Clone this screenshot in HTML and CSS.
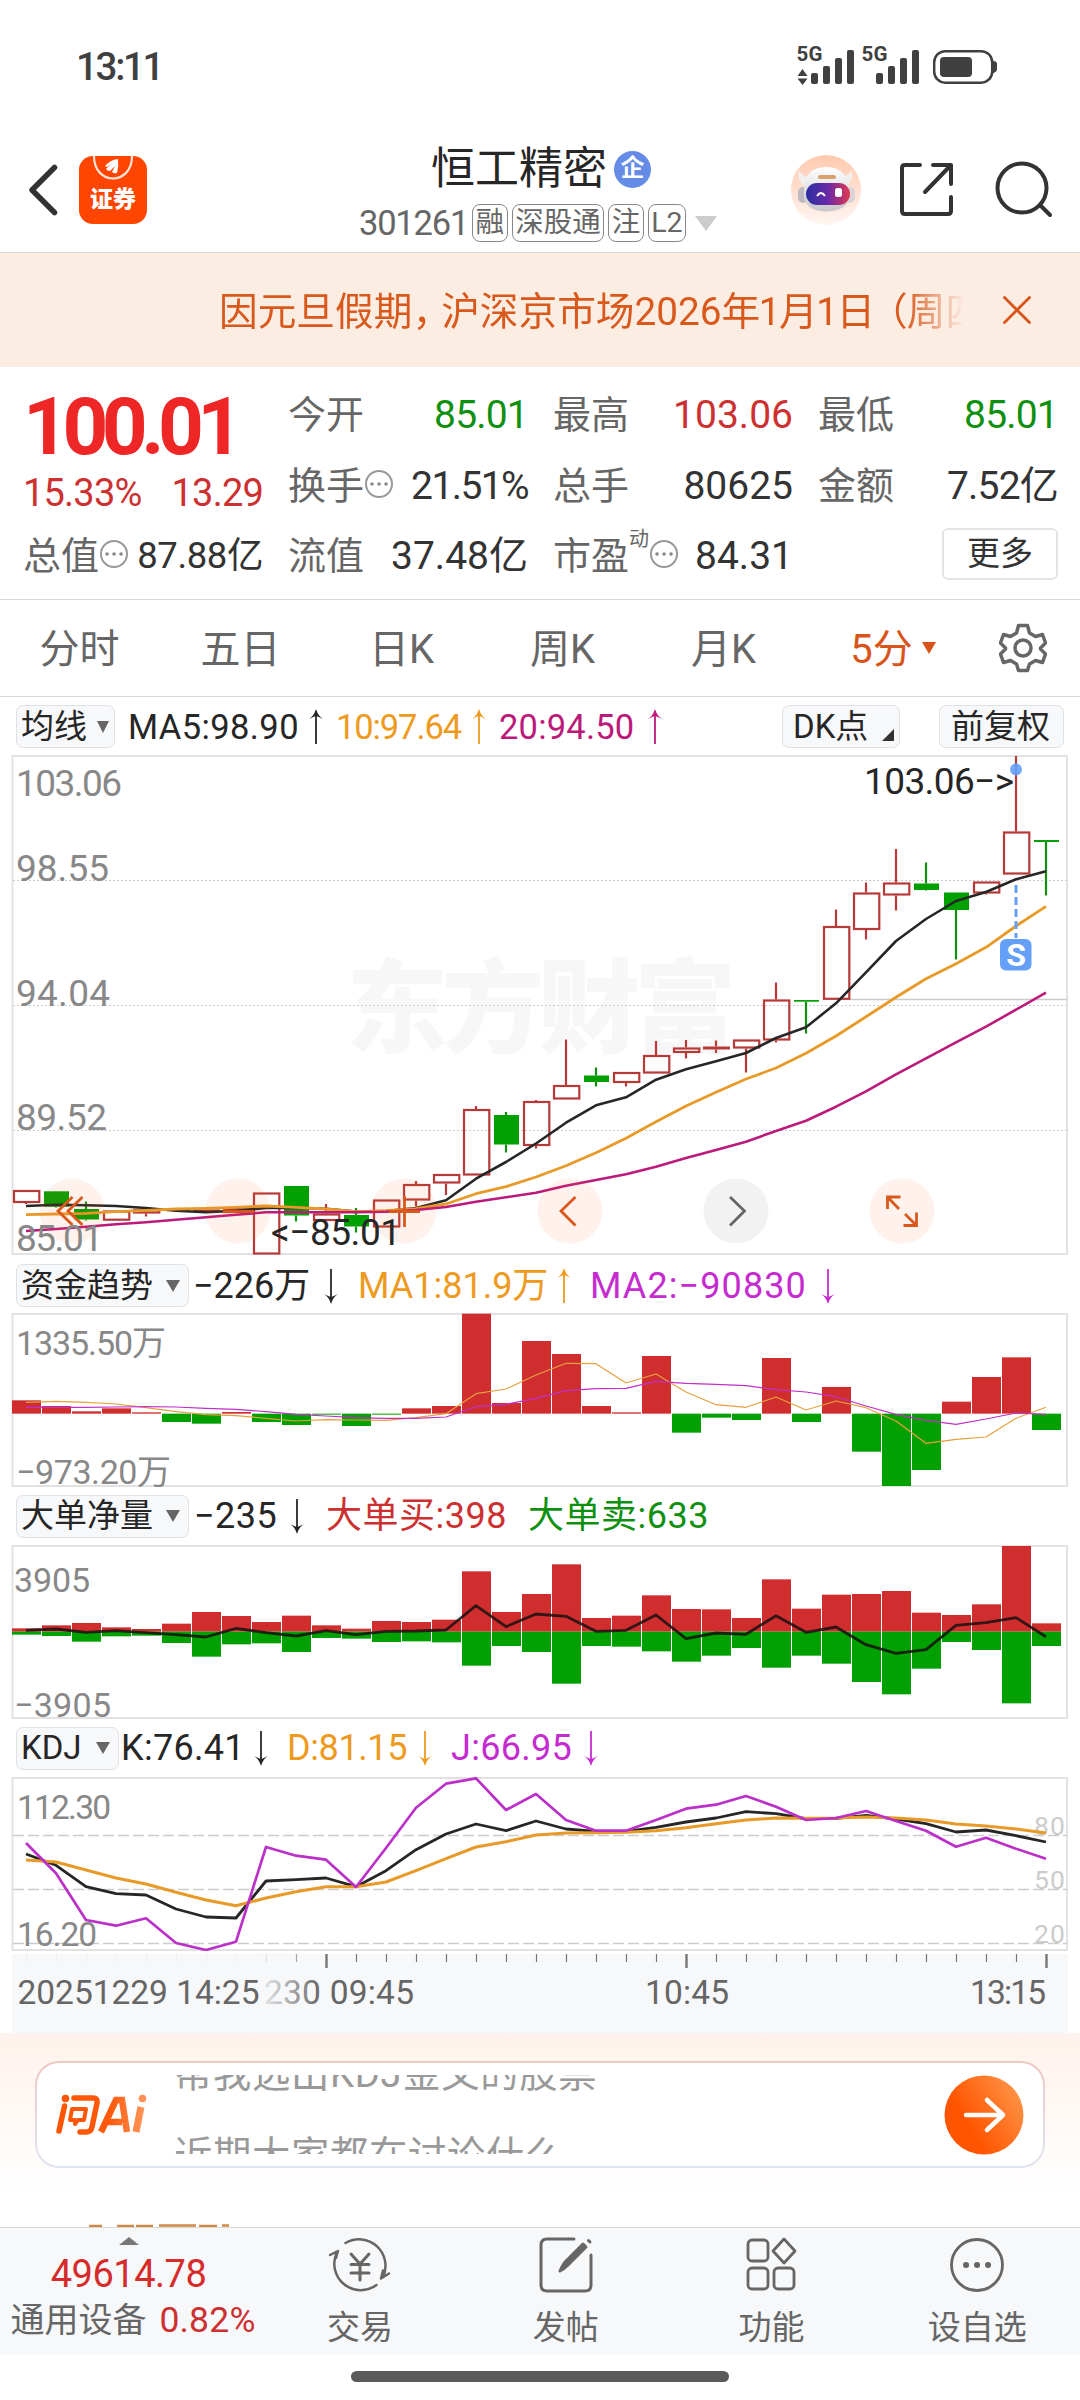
FILE: index.html
```html
<!DOCTYPE html>
<html lang="zh-CN">
<head>
<meta charset="utf-8">
<title>恒工精密 301261</title>
<link rel="stylesheet" href="styles.css">
</head>
<body>
<div class="status">
  <span class="clock">13:11</span>
  <svg class="signals" width="202" height="42" viewBox="796 42 202 42">
    <g fill="#404040">
      <text x="796.500" y="59" font-size="20.500" font-weight="700" textLength="26">5G</text>
      <text x="861.500" y="59" font-size="20.500" font-weight="700" textLength="26">5G</text>
      <path d="M802.500 67l5 7h-10zM802.500 83l5-6.500h-10z"/>
      <rect x="811" y="71" width="7" height="11" rx="2"/><rect x="823" y="64" width="7" height="18" rx="2"/><rect x="835" y="56" width="7" height="26" rx="2"/><rect x="847" y="48" width="7" height="34" rx="2"/>
      <rect x="876" y="71" width="7" height="11" rx="2"/><rect x="888" y="64" width="7" height="18" rx="2"/><rect x="900" y="56" width="7" height="26" rx="2"/><rect x="912" y="48" width="7" height="34" rx="2"/>
      <rect x="940" y="55" width="32" height="20" rx="4"/><path d="M993 59q4 0 4 3v5q0 3-4 4z"/>
    </g>
    <rect x="934.200" y="49.200" width="58" height="31.500" rx="11" fill="none" stroke="#404040" stroke-width="2.500"/>
  </svg>
</div>

<header class="header">
  <div class="left">
    <svg width="32" height="54" viewBox="0 0 32 54" fill="none" stroke="#333" stroke-width="5.500" stroke-linecap="round" stroke-linejoin="round"><path d="M28.500 4.500L6 27l22.500 22.500"/></svg>
    <div class="app">
      <svg width="68" height="26" viewBox="0 0 68 26" fill="none"><path d="M15 0c0 30 38 30 38 0" stroke="#ffe3d6" stroke-width="2.200"/><path d="M26 10q5-6 13-7q1 7-1 14-3 1-5-1l3-6-5 5q-3 0-4-2l5-5-4 3z" fill="#fff"/></svg>
      <span>证券</span>
    </div>
  </div>
  <div class="title">
    <div class="name">恒工精密<i class="corp">企</i></div>
    <div class="sub"><span class="code">301261</span><b>融</b><b>深股通</b><b>注</b><b>L2</b><svg width="22" height="15" viewBox="0 0 22 15"><path d="M0 0h22L11 15z" fill="#ccc"/></svg></div>
  </div>
  <div class="right">
    <svg width="70" height="70" viewBox="0 0 70 70">
      <defs>
        <linearGradient id="halo" x2="0" y2="1"><stop stop-color="#ffc9ae"/><stop offset="1" stop-color="#fff6f2"/></linearGradient>
        <linearGradient id="visor"><stop stop-color="#2b2fa0"/><stop offset=".5" stop-color="#6a2aa8"/><stop offset="1" stop-color="#e23a50"/></linearGradient>
        <linearGradient id="shell" x2="0" y2="1"><stop stop-color="#fff"/><stop offset="1" stop-color="#c9c6cc"/></linearGradient>
      </defs>
      <circle cx="35" cy="35" r="35" fill="url(#halo)"/>
      <path d="M8 15q-2 12 6 16l8-8q-10 0-14-8zM61 15q2 10-5 15l-8-8q9 0 13-7z" fill="#f3efef"/>
      <rect x="7" y="32" width="10" height="16" rx="5" fill="#bdb9bf"/><rect x="54" y="32" width="10" height="16" rx="5" fill="#d8d4d8"/>
      <path d="M13 36q0-24 22-24t23 24q3 20-23 20.500Q11 56 13 36z" fill="url(#shell)"/>
      <rect x="27" y="20" width="18" height="4" rx="2" fill="#dba06c"/>
      <rect x="15" y="28" width="44" height="22" rx="11" fill="url(#visor)"/>
      <path d="M26 41q4-6 8 0" stroke="#fff" stroke-width="2" fill="none"/><rect x="44" y="33" width="7" height="9" rx="2.500" fill="#fff"/>
    </svg>
    <svg width="56" height="56" viewBox="0 0 56 56" fill="none" stroke="#333" stroke-width="4" stroke-linecap="round" stroke-linejoin="round"><path d="M21 3H6q-3 0-3 3v43q0 3 3 3h43q3 0 3-3V35M34 3h18v19M52 3L26 30"/></svg>
    <svg width="58" height="58" viewBox="0 0 58 58" fill="none" stroke="#333" stroke-width="4" stroke-linecap="round"><circle cx="27" cy="27" r="24.500"/><path d="M45 44l10 10"/></svg>
  </div>
</header>

<div class="banner">
  <div class="notice">因元旦假期<span class="comma">，</span>沪深京市场2026年<span class="one">1</span>月<span class="one">1</span>日<span class="paren">（</span>周四）</div>
  <svg width="30" height="30" viewBox="0 0 30 30" stroke="#d9541a" stroke-width="2.800" stroke-linecap="round"><path d="M2.500 2.500l25 25M27.500 2.500l-25 25"/></svg>
</div>

<section class="quote">
  <div class="price">100.01</div>
  <div class="q"><label>今开</label><span class="g">85.01</span></div>
  <div class="q"><label>最高</label><span class="r">103.06</span></div>
  <div class="q"><label>最低</label><span class="g">85.01</span></div>
  <div class="q pct"><span class="r">15.33%</span><span class="r">13.29</span></div>
  <div class="q"><label>换手<svg class="dots" viewBox="0 0 30 30"><circle cx="15" cy="15" r="13" fill="none" stroke="#999" stroke-width="2"/><path d="M8 15h.1M15 15h.1M22 15h.1" stroke="#888" stroke-width="3.500" stroke-linecap="round"/></svg></label><span class="n2">21.51%</span></div>
  <div class="q"><label>总手</label><span>80625</span></div>
  <div class="q"><label>金额</label><span class="n3">7.52亿</span></div>
  <div class="q"><label>总值<svg class="dots" viewBox="0 0 30 30"><circle cx="15" cy="15" r="13" fill="none" stroke="#999" stroke-width="2"/><path d="M8 15h.1M15 15h.1M22 15h.1" stroke="#888" stroke-width="3.500" stroke-linecap="round"/></svg></label><span class="small">87.88亿</span></div>
  <div class="q"><label>流值</label><span>37.48亿</span></div>
  <div class="q"><label>市盈<sup>动</sup><svg class="dots" viewBox="0 0 30 30"><circle cx="15" cy="15" r="13" fill="none" stroke="#999" stroke-width="2"/><path d="M8 15h.1M15 15h.1M22 15h.1" stroke="#888" stroke-width="3.500" stroke-linecap="round"/></svg></label><span>84.31</span></div>
  <div class="q end"><button class="more">更多</button></div>
</section>

<nav class="tabs">
  <a>分时</a><a>五日</a><a>日K</a><a>周K</a><a>月K</a>
  <a class="on">5分<svg width="14" height="12" viewBox="0 0 14 12"><path d="M0 0h14L7 12z" fill="#d9541a"/></svg></a>
  <svg class="gear" width="48" height="50" viewBox="0 0 48 50" fill="none" stroke="#666" stroke-width="3.500" stroke-linejoin="round"><path d="M19.500 2.500h9l2 7.500 6 3.500 7-2 3 8.500-5 5v1l5 5-3 8.500-7-2-6 3.500-2 6.500h-9l-2-6.500-6-3.500-7 2-3-8.500 5-5v-1l-5-5 3-8.500 7 2 6-3.500z"/><circle cx="24" cy="25" r="8"/></svg>
</nav>

<div class="legend lg1">
  <button>均线<i class="tri"></i></button>
  <span class="k">MA5:98.90</span><svg class="up k"><use href="#arrow"/></svg>
  <span class="o">10:97.64</span><svg class="up o"><use href="#arrow"/></svg>
  <span class="m">20:94.50</span><svg class="up m"><use href="#arrow"/></svg>
  <button class="dk">DK点<i class="corner"></i></button>
  <button class="fq">前复权</button>
</div>
<svg class="hidden" width="0" height="0"><defs><symbol id="arrow" viewBox="0 0 16 36"><path d="M8 35V2" stroke="currentColor" stroke-width="1.800" fill="none"/><path d="M1 10Q6 7 8 0q2 7 7 10Q9 7 8 7T1 10z" fill="currentColor"/></symbol></defs></svg>

<svg class="chart" id="candles" width="1080" height="502" viewBox="0 754 1080 502">
  <g fill="#f7f7f7"><text x="346" y="1045" font-size="102" font-weight="900" textLength="390">东方财富</text></g>
  <rect x="12.500" y="756" width="1054.500" height="498" class="frame"/>
  <path d="M13 880.500H1067M13 1005.500H1067M13 1130.500H1067" stroke="#ccc" stroke-dasharray="2 2"/>
  <path d="M850 999.500H1067" stroke="#ccc" stroke-width="1.500"/>
</svg>

<div class="legend lg2">
  <button>资金趋势<i class="tri"></i></button>
  <span class="k">−226万</span><svg class="down k"><use href="#arrow"/></svg>
  <span class="o">MA1:81.9万</span><svg class="up o"><use href="#arrow"/></svg>
  <span class="p">MA2:−90830</span><svg class="down p"><use href="#arrow"/></svg>
</div>
<svg class="chart" id="flow" width="1080" height="174" viewBox="0 1313 1080 174">
  <rect x="12.500" y="1314" width="1054.500" height="172" class="frame"/>
</svg>

<div class="legend lg3">
  <button>大单净量<i class="tri"></i></button>
  <span class="k">−235</span><svg class="down k"><use href="#arrow"/></svg>
  <span class="r">大单买:398</span>
  <span class="g">大单卖:633</span>
</div>
<svg class="chart" id="orders" width="1080" height="174" viewBox="0 1545 1080 174">
  <rect x="12.500" y="1546" width="1054.500" height="172" class="frame"/>
</svg>

<div class="legend lg4">
  <button>KDJ<i class="tri"></i></button>
  <span class="k">K:76.41</span><svg class="down k"><use href="#arrow"/></svg>
  <span class="o">D:81.15</span><svg class="down o"><use href="#arrow"/></svg>
  <span class="p">J:66.95</span><svg class="down p"><use href="#arrow"/></svg>
</div>
<svg class="chart" id="kdj" width="1080" height="174" viewBox="0 1777 1080 174">
  <rect x="12.500" y="1778" width="1054.500" height="172" class="frame"/>
  <path d="M13 1835.500H1067M13 1889.500H1067M13 1943.500H1067" stroke="#ccc" stroke-width="1.500" stroke-dasharray="11 4"/>
</svg>
<svg class="chart" id="axis" width="1080" height="82" viewBox="0 1951 1080 82">
  <defs><linearGradient id="fade"><stop stop-color="#f7f8fa"/><stop offset=".15" stop-color="#f7f8fa" stop-opacity=".85"/><stop offset="1" stop-color="#f7f8fa" stop-opacity="0"/></linearGradient></defs>
  <rect x="12" y="1954" width="1056" height="79" fill="#f7f8fa"/>
</svg>

<section class="ask">
  <div class="card">
    <svg class="logo" width="94" height="44" viewBox="54 2093 94 44">
      <defs><linearGradient id="ai" gradientUnits="userSpaceOnUse" x1="56" y1="0" x2="147" y2="0"><stop stop-color="#ff5500"/><stop offset=".6" stop-color="#ff5a0c"/><stop offset="1" stop-color="#ff9a60"/></linearGradient></defs>
      <g fill="none" stroke="url(#ai)">
        <path d="M64.500 2106l-5.500 25M74 2098h19q5 0 4 5l-5 24q-1 5-6 5h-6" stroke-width="5.500" stroke-linecap="round"/>
        <path d="M72 2109h14l-2 11h-6l-3 4v-4h-5z" stroke-width="4" stroke-linejoin="round"/>
        <path d="M101 2132l15-32h6l5 32M108 2122h14" stroke-width="6.500"/>
        <path d="M141 2107l-5 25" stroke-width="7"/>
      </g>
      <circle cx="65.500" cy="2098.500" r="3.800" fill="#ff5500"/><circle cx="142.500" cy="2098.500" r="3.800" fill="#ff9058"/>
    </svg>
    <div class="ticker"><p>帮我选出KDJ金叉的股票</p><p>近期大家都在讨论什么</p></div>
    <svg width="80" height="80" viewBox="0 0 80 80"><defs><linearGradient id="go" x1="0" y1=".7" x2="1" y2=".1"><stop offset=".25" stop-color="#ff5500"/><stop offset="1" stop-color="#ff9a4e"/></linearGradient></defs><circle cx="40" cy="40" r="39.500" fill="url(#go)"/><path d="M22 40h36M43 25l16 15-16 15" fill="none" stroke="#fff" stroke-width="4.500" stroke-linecap="round" stroke-linejoin="round"/></svg>
  </div>
  <svg class="peek" width="150" height="3" viewBox="0 0 150 3"><path d="M1 2h13M29 2h17M48 2h17M71 1.500h37M111 2h18M134 1.500h7" stroke="#cf8a45" stroke-width="2.500"/></svg>
</section>

<nav class="bottom">
  <div class="index">
    <svg width="20" height="8" viewBox="0 0 20 8"><path d="M0 8L10 0l10 8z" fill="#777"/></svg>
    <strong>49614.78</strong>
    <div>通用设备<em>0.82%</em></div>
  </div>
  <a><svg viewBox="0 0 64 60" fill="none" stroke="#666" stroke-width="2.500" stroke-linecap="round" stroke-linejoin="round"><path d="M17.500 8A26.500 26.500 0 0 1 55 42M48.500 50A26.500 26.500 0 0 1 9 17M2 20l8-4-2 7M61 38.500l-8 5 2-8"/><path d="M23 19l9 10 9-10M32 29v16M23 29.500h18M23 38h18" stroke-width="3"/></svg>交易</a>
  <a><svg viewBox="0 0 64 60" fill="none" stroke="#666" stroke-width="3" stroke-linecap="round" stroke-linejoin="round"><path d="M40 4H13q-6 0-6 6v40q0 6 6 6h38q6 0 6-6V20"/><path d="M26 36q3-7 6-10l17-17 3 3-18 18q-4 4-8 6zM54.500 5.500l1.500 1.500" fill="#666"/></svg>发帖</a>
  <a><svg viewBox="0 0 64 60" fill="none" stroke="#666" stroke-width="2.800" stroke-linejoin="round"><rect x="9" y="5" width="20" height="21" rx="4"/><rect x="9" y="33" width="20" height="21" rx="4"/><rect x="35" y="33" width="20" height="21" rx="4"/><path d="M45 4L56 16 45 28 34 16z"/></svg>功能</a>
  <a><svg viewBox="0 0 64 60" fill="none" stroke="#666" stroke-width="2.800"><circle cx="32" cy="30" r="25.500"/><path d="M21 30h.1M32 30h.1M43 30h.1" stroke-width="6" stroke-linecap="round"/></svg>设自选</a>
</nav>
<div class="home"></div>
<script src="chart.js"></script>
</body>
</html>
```
FILE: styles.css
```css
* { box-sizing: border-box; }
body {
  margin: 0; width: 1080px; height: 2400px; overflow: hidden; background: #fff; color: #333;
  font-family: Roboto, "Noto Sans CJK SC", sans-serif;
}
button { font: inherit; color: inherit; padding: 0; margin: 0; }
svg { display: block; flex: none; }
i, em { font-style: normal; }
.hidden { height: 0; }

.status { height: 130px; display: flex; justify-content: space-between; align-items: center; padding: 0 82px 0 76px; }
.clock { font-size: 38.5px; font-weight: 500; color: #404040; letter-spacing: -2.3px; line-height: 40px; margin-top: 3px; }
.signals { overflow: visible; }

.header { height: 123px; border-bottom: 1px solid #d8d8d8; display: grid; grid-template-columns: 300px 1fr 300px; }
.left { display: flex; align-items: center; padding: 0 0 2px 26px; gap: 21px; }
.app { width: 68px; height: 68px; border-radius: 14px; background: #ff4500; color: #fff; overflow: hidden; text-align: center; }
.app span { display: block; font-size: 23px; font-weight: 900; line-height: 26px; margin-top: 5px; }
.title { display: flex; flex-direction: column; align-items: center; padding-top: 13px; }
.name { display: flex; align-items: center; font-size: 44px; line-height: 50px; color: #262626; height: 52px; margin-left: 2px; }
.corp { width: 37px; height: 37px; border-radius: 50%; background: #648ce6; color: #fff; font-size: 24px; font-weight: 700; line-height: 35px; text-align: center; margin-left: 7px; }
.sub { display: flex; align-items: center; color: #666; margin: 8px 0 0 -4px; height: 40px; }
.code { font-size: 34.5px; letter-spacing: -1.2px; margin-right: 4px; }
.sub b { height: 38px; border: 1.5px solid #888; border-radius: 8px; font-weight: 400; font-size: 28.5px; line-height: 35px; padding: 0 2.5px; margin-right: 4px; }
.sub svg { margin-left: 5px; }
.right { display: flex; align-items: center; padding: 0 0 2px 11px; }
.right svg:nth-child(2) { margin-left: 38px; }
.right svg:nth-child(3) { margin-left: 40px; }

.banner { height: 114px; background: #fcede3; color: #d9591c; display: flex; align-items: center; padding-left: 219px; }
.notice { width: 745px; font-size: 38.7px; line-height: 60px; padding-top: 3px; white-space: nowrap; overflow: hidden; -webkit-mask-image: linear-gradient(90deg, #000 92%, transparent 100%); mask-image: linear-gradient(90deg, #000 92%, transparent 100%); }
.comma { margin-right: -10px; }
.paren { margin: 0 -1px 0 -6px; }
.notice .one { margin: 0 -1.5px; }
.banner svg { margin-left: 38px; }

.quote { height: 233px; border-bottom: 1px solid #d8d8d8; display: grid; grid-template-columns: repeat(4, 1fr); grid-template-rows: 76px 65px 75px; column-gap: 25px; padding: 10px 22px 0 23px; }
.q { display: flex; justify-content: space-between; align-items: center; font-size: 39px; line-height: 50px; white-space: nowrap; }
.q label { display: flex; align-items: center; color: #666; font-size: 38px; }
.q sup { font-size: 20px; line-height: 20px; margin: -34px 0 0 0; }
.price { font-size: 80px; font-weight: 700; color: #ee2626; line-height: 98px; letter-spacing: -6.5px; padding-top: 1px; white-space: nowrap; }
.q.pct { padding-top: 14px; }
.q.pct span { font-size: 38px; letter-spacing: -.8px; }
.dots { width: 30px; height: 30px; margin-top: -3px; }
.r, .legend .r { color: #cc3030; }
.g, .legend .g { color: #109010; }
.q .g { letter-spacing: -.8px; }
.q .n2 { letter-spacing: -1.6px; }
.q .n3 { letter-spacing: -.8px; }
.q .small { font-size: 36.5px; letter-spacing: -.4px; }
.end { justify-content: flex-end; }
.more { width: 116px; height: 52px; border: 2px solid #e4e4e4; border-radius: 6px; background: #fff; font-size: 33px; line-height: 46px; margin-bottom: 3px; }

.tabs { height: 97px; border-bottom: 1px solid #d8d8d8; display: flex; align-items: center; font-size: 40px; color: #666; margin-left: -1px; }
.tabs a { width: 161px; display: flex; justify-content: center; align-items: center; line-height: 60px; padding-top: 3px; }
.tabs .on { color: #d9541a; padding-left: 17px; }
.on svg { margin: 0 0 4px 9px; }
.gear { margin-left: 34px; }

.legend { display: grid; height: 57px; align-items: center; padding-left: 16px; font-size: 36px; line-height: 44px; white-space: nowrap; }
.legend button { height: 43px; background: #f7f8fa; border: 1.5px solid #dfe1e4; border-radius: 7px; font-size: 33px; line-height: 40px; display: flex; align-items: center; justify-content: space-between; padding: 0 8px 0 4px; color: #262626; }
.legend > svg { width: 16px; height: 36px; }
.down { transform: rotate(180deg); }
.k { color: #262626; } .o { color: #ee9a1e; } .m { color: #bb1a7a; } .p { color: #c52ccf; }
.tri { border: 7px solid transparent; border-top: 12px solid #666; border-bottom: 0; }
.corner { border: 6px solid #333; border-top-color: transparent; border-left-color: transparent; align-self: flex-end; margin-bottom: 6px; }
.lg1 { grid-template-columns: 112px 180px 28px 135px 28px 148px 135px 157px 125px; font-size: 34.5px; padding-top: 2px; }
.lg1 span { letter-spacing: .4px; }
.lg1 .o { letter-spacing: -1.1px; }
.lg1 .m { letter-spacing: .2px; }
.lg1 button { padding-right: 5px; width: 99px; }
.lg1 .tri { border-width: 12px 6px 0; }
.lg1 .dk { width: 118px; padding-left: 10px; }
.lg1 .fq { width: 125px; padding: 0 11px; }
.lg3, .lg4 { height: 58px; }
.lg2 { grid-template-columns: 177px 130px 35px 198px 34px 230px 30px; padding-top: 2px; }
.lg2 .p { letter-spacing: 1.1px; }
.lg2 button, .lg3 button { width: 173px; }
.lg3 { grid-template-columns: 178px 95px 37px 202px 300px; }
.lg3 span { letter-spacing: .5px; }
.lg4 { grid-template-columns: 105px 132px 34px 130px 34px 132px 30px; }
.lg4 button { width: 103px; }
.lg4 span { letter-spacing: .3px; }
.lg4 .o { letter-spacing: -.4px; }
.frame { fill: none; stroke: #e2e2e2; stroke-width: 2; }

.ask { height: 194px; background: linear-gradient(#fff2ec, #fff 85%); padding: 28px 35px 0; display: flex; flex-direction: column; justify-content: space-between; }
.card { height: 107px; border: 2px solid transparent; border-radius: 24px; background: linear-gradient(#fff, #fff) padding-box, linear-gradient(#edc9c2, #dfe5f2) border-box; display: flex; align-items: center; padding: 0 19px 0 17px; }
.ticker { flex: 1; height: 79px; overflow: hidden; display: flex; flex-direction: column; justify-content: center; margin-left: 26px; color: #999; font-size: 38.3px; letter-spacing: .7px; }
.ticker p { margin: 0; flex: none; line-height: 82px; white-space: nowrap; }
.peek { margin-left: 53px; }

.bottom { height: 128px; background: #f7f8fa; border-top: 1px solid #d8d8d8; display: grid; grid-template-columns: 257px repeat(4, 1fr); color: #666; font-size: 33px; }
.index { display: flex; flex-direction: column; align-items: center; padding-top: 9px; font-size: 34px; white-space: nowrap; }
.index strong { font-weight: 400; font-size: 38px; color: #d62b2b; line-height: 58px; letter-spacing: -.5px; }
.index div { line-height: 34px; padding-left: 9px; }
.index em { color: #cc3030; margin-left: 13px; font-size: 35.5px; letter-spacing: .2px; }
.bottom a { display: flex; flex-direction: column; align-items: center; line-height: 50px; padding-top: 7px; gap: 8px; }
.bottom a svg { width: 64px; height: 60px; }
.home { width: 378px; height: 11px; border-radius: 6px; background: #5a5a5a; margin: 16px auto 0; }
```
FILE: chart.js
```js
const NS = 'http://www.w3.org/2000/svg';
const X = i => 26 + 30 * i;
const RED = '#b83a38', GREEN = '#00a000', GRAY = '#888';

function el(parent, tag, attrs, text) {
  const node = document.createElementNS(NS, tag);
  for (const k in attrs) node.setAttribute(k, attrs[k]);
  if (text) node.textContent = text;
  parent.appendChild(node);
  return node;
}
function line(parent, values, color, width, map = v => v) {
  el(parent, 'polyline', {
    points: values.map((v, i) => X(i) + ',' + map(v).toFixed(1)).join(' '),
    fill: 'none', stroke: color, 'stroke-width': width, 'stroke-linejoin': 'round'
  });
}
function label(parent, text, x, y, len, size, fill = GRAY) {
  el(parent, 'text', { x: x - 1, y, 'font-size': size, fill, textLength: len + 2, lengthAdjust: 'spacing' }, text);
}

// Candles: direction, body top, body bottom, high, low
const candles = [
  ['r',1190,1203,1190,1204],['g',1191.3,1206.7,1191,1207.5],['g',1209,1219.5,1201.5,1220.5],['r',1210.5,1220.7,1210.5,1220.7],
  ['r',1209,1213.5,1207,1216.5],['r',1209,1211,1208,1211],['r',1209.5,1211.5,1209.5,1211.5],['r',1208,1213,1208,1213],
  ['r',1192.5,1254.5,1192.5,1254.5],['g',1186,1215.5,1186,1221.5],['r',1213.5,1221,1204,1221],['g',1215,1226.5,1208,1232.5],
  ['r',1199.5,1227.5,1199.5,1227.5],['r',1184,1200.5,1181,1206.5],['r',1174,1183.5,1174,1195],['r',1109,1175.5,1106,1175.5],
  ['g',1115,1144.5,1112,1152.5],['r',1101,1146,1100,1148.5],['r',1085,1099.5,1039.5,1099.5],['g',1075.5,1082,1067.5,1086.5],
  ['r',1072,1083,1072,1086.5],['r',1055,1073.5,1041,1073.5],['r',1047.5,1053,1040,1058.5],['r',1046.5,1049.5,1040.5,1053],
  ['r',1039.5,1048.5,1039.5,1072.5],['r',999.5,1040.5,982.5,1042.5],['g',1000,1001.7,1000,1033.5],['r',926,999.8,909.5,999.8],
  ['r',892.5,930,882.5,939.5],['r',882.5,895.5,849,910.5],['g',883.5,890,862.5,890.5],['g',892.5,910,892.5,959.5],
  ['r',881.5,893.5,881.5,894.5],['r',831.5,874.5,756,874.5],['g',840,842,840,895.5]
];
const ma5 = [1206,1204.7,1205.3,1206,1208,1210.7,1212.3,1210.7,1208,1207.7,1208.7,1211.5,1211,1208,1200.3,1178.7,1162,1143.5,1122.7,1105.3,1097.3,1079.7,1069.3,1061.3,1053,1038,1027.3,1003.3,972.3,941,919,901,892,879.3,871.3];
const ma10 = [1214.7,1214,1213.3,1211.7,1210.3,1209,1208.3,1207.3,1206,1207.3,1209,1211.7,1210.7,1208.7,1204,1193.7,1186.7,1177,1165.7,1152.7,1138.3,1121.7,1106,1092.3,1079,1068,1053.3,1036,1016.7,997.3,978.7,963.7,947.3,926,906.3];
const ma20 = [1231,1229,1226.7,1224.3,1222.3,1219.7,1217.3,1214.7,1212.3,1212.3,1212.3,1212.3,1211.7,1210,1207,1201.7,1197.3,1192.7,1185.7,1180,1174.3,1166.7,1158,1150,1141.7,1131,1120.7,1106.7,1091.3,1074.3,1058.3,1042.3,1026.7,1009.7,992.7];

const main = document.getElementById('candles');
candles.forEach(([d, top, bottom, high, low], i) => {
  const x = X(i), stroke = d === 'r' ? RED : '#109010', w = { stroke, 'stroke-width': 2.2 };
  if (high < top) el(main, 'path', { d: `M${x} ${high}V${top}`, ...w });
  if (low > bottom) el(main, 'path', { d: `M${x} ${bottom}V${low}`, ...w });
  if (d === 'g') el(main, 'rect', { x: x - 12, y: top, width: 25, height: bottom - top, fill: GREEN });
  else if (bottom - top < 4) el(main, 'rect', { x: x - 13, y: top, width: 27, height: bottom - top, fill: RED });
  else el(main, 'rect', { x: x - 12, y: top + 1, width: 25.3, height: bottom - top - 2, fill: 'none', ...w });
});
line(main, ma5, '#262626', 2.6);
line(main, ma10, '#e89a28', 2.8);
line(main, ma20, '#bb1a7a', 2.6);

// Floating pan and zoom controls
[72, 238, 404, 570, 736, 902].forEach((cx, i) =>
  el(main, 'circle', { cx, cy: 1211, r: 32.5, fill: i === 4 ? 'rgba(0,0,0,.05)' : 'rgba(250,100,30,.09)' }));
const icon = (d, stroke = '#d9591c') => el(main, 'path', { d, fill: 'none', stroke, 'stroke-width': 2.8 });
icon('M72.500 1197L58 1211l14.500 14M82.500 1197L68 1211l14.500 14');
icon('M223 1211.500h31');
icon('M389 1211.500h31M404.500 1196v31');
icon('M575.500 1197L561 1211l14.500 14.500');
icon('M730 1197l14.500 14-14.500 14.500', '#666');
icon('M887.500 1209v-12h13M887.500 1197l11.500 12M903.500 1225.500h13v-13M905 1214l11.500 11.500');

// Price scale and extremes
label(main, '103.06', 17, 796, 104, 37);
label(main, '98.55', 17, 881, 91, 37);
label(main, '94.04', 17, 1006, 92, 37);
label(main, '89.52', 17, 1130, 89, 37);
label(main, '85.01', 17, 1250.500, 85, 37);
label(main, '103.06−>', 865, 793.500, 148, 37, '#262626');
label(main, '<−85.01', 272, 1245, 128, 37, '#262626');

// Sell marker
el(main, 'circle', { cx: 1016, cy: 769.5, r: 6, fill: '#64a0f8', 'fill-opacity': .9 });
el(main, 'path', { d: 'M1016 885V938', stroke: '#64a0f8', 'stroke-width': 3, 'stroke-dasharray': '8 4' });
el(main, 'rect', { x: 1000, y: 939, width: 31.5, height: 31.5, rx: 6, fill: '#64a0f8' });
el(main, 'text', { x: 1016, y: 966, 'font-size': 32, 'font-weight': 700, fill: '#fff', 'text-anchor': 'middle' }, 'S');

// Money flow
const toY = v => 1260 + v / 3;
const flow = document.getElementById('flow');
const bar = (p, i, a, b, fill) => el(p, 'rect', { x: X(i) - 14, y: Math.min(a, b), width: 29, height: Math.max(1, Math.abs(b - a)), fill });
[421,438,454,445,457,486,491,456,486,495,464,498,464,445,438,161,429,243,282,438,457,288,518,473,480,294,486,381,575,678,630,425,351,292,510]
  .forEach((v, i) => bar(flow, i, toY(461), toY(v), v > 461 ? GREEN : '#d02e2e'));
line(flow, [427,424,427,432,443,455,464,467,475,483,479,480,481,473,461,401,387,345,310,311,369,342,396,434,442,411,450,423,443,483,550,538,531,475,442], '#e6a040', 1.2, toY);
line(flow, [442,442,442,441,440,441,445,448,455,463,468,473,475,475,471,440,433,415,392,386,385,364,370,373,377,389,396,410,438,463,481,493,477,459,463], '#c030c8', 1.2, toY);
label(flow, '1335.50万', 17, 1355, 148, 34);
label(flow, '−973.20万', 17, 1484, 153, 34);

// Large orders
const orders = document.getElementById('orders');
[1105,1096,1089,1102,1107,1091,1056,1068,1086,1067,1096,1106,1083,1086,1079,934,1056,1002,913,1074,1067,1006,1047,1048,1074,958,1046,1004,1002,993,1058,1065,1033,858,1090]
  .forEach((v, i) => bar(orders, i, toY(1115), toY(v), '#d02e2e'));
[1124,1128,1145,1129,1127,1149,1190,1153,1150,1176,1134,1136,1146,1144,1147,1217,1158,1176,1271,1158,1160,1174,1205,1187,1164,1223,1187,1211,1266,1303,1226,1146,1170,1330,1158]
  .forEach((v, i) => bar(orders, i, toY(1115), toY(v), GREEN));
line(orders, [1111,1107,1117,1112,1118,1124,1131,1105,1118,1128,1112,1124,1114,1113,1110,1037,1100,1062,1069,1114,1111,1065,1136,1119,1123,1067,1117,1101,1154,1180,1169,1096,1088,1073,1130], 'rgba(25,15,15,.85)', 2.8, toY);
label(orders, '3905', 15, 1592, 74, 34);
label(orders, '−3905', 15, 1717, 95, 34);

// KDJ
const kdj = document.getElementById('kdj'), kY = v => 1740 + v / 3;
label(kdj, '112.30', 18, 1818.5, 92, 33.5);
label(kdj, '16.20', 18, 1945.5, 78, 33.5);
label(kdj, '80', 1035, 1835, 29, 26.5, '#ccc');
label(kdj, '50', 1035, 1889, 29, 26.5, '#ccc');
label(kdj, '20', 1035, 1942.5, 29, 26.5, '#ccc');
line(kdj, [342,376,440,461,465,507,531,534,423,419,414,440,392,329,282,252,272,243,267,274,274,262,246,234,215,221,236,235,226,237,251,276,270,287,306], '#262626', 2.8, kY);
line(kdj, [360,366,390,414,432,457,480,497,474,455,440,440,426,392,356,321,305,285,279,278,277,272,263,251,240,234,235,234,231,234,240,252,258,267,279], '#e89a28', 3, kY);
line(kdj, [309,400,540,557,535,609,630,605,321,347,359,441,324,203,131,115,210,162,240,272,272,240,206,194,168,200,240,234,213,243,272,320,293,326,356], '#bb30c8', 2.7, kY);

// Time axis
const axis = document.getElementById('axis');
for (let i = 0; i < 35; i++) {
  const major = i === 10 || i === 22 || i === 34;
  el(axis, 'path', { d: `M${X(i) + .5} 1954V${major ? 1968 : 1962}`, stroke: i < 8 ? '#eee' : '#777', 'stroke-width': major ? 2.4 : 1.2 });
}
label(axis, '230 09:45', 265, 2004, 148, 33.5, '#666');
el(axis, 'rect', { x: 255, y: 1953, width: 66, height: 60, fill: 'url(#fade)' });
label(axis, '20251229 14:25', 18.5, 2004, 240, 33.5, '#666');
label(axis, '10:45', 646, 2004, 82, 33.5, '#666');
label(axis, '13:15', 971, 2004, 74, 33.5, '#666');
```
